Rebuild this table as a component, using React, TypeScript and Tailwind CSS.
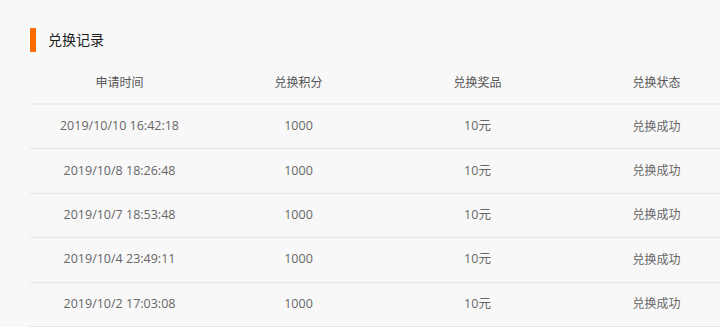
const rows = [
  { time: "2019/10/10 16:42:18", points: "1000", prize: "10元", status: "兑换成功" },
  { time: "2019/10/8 18:26:48", points: "1000", prize: "10元", status: "兑换成功" },
  { time: "2019/10/7 18:53:48", points: "1000", prize: "10元", status: "兑换成功" },
  { time: "2019/10/4 23:49:11", points: "1000", prize: "10元", status: "兑换成功" },
  { time: "2019/10/2 17:03:08", points: "1000", prize: "10元", status: "兑换成功" },
];

const headers = ["申请时间", "兑换积分", "兑换奖品", "兑换状态"];

function App() {
  return (
    <div
      className="h-[327px] w-[720px] overflow-hidden bg-[#f8f8f9]"
      style={{ fontFamily: '"Open Sans", "Noto Sans CJK SC", sans-serif' }}
    >
      <div className="pl-[30px] pt-[28px]">
        <div className="flex items-center h-[24px]">
          <span className="block h-[24px] w-[6px] rounded-[1px] bg-[#ff6a00]" />
          <h2 className="ml-[12px] -mt-[1px] text-[14px] font-normal text-[#222]">兑换记录</h2>
        </div>

        <div className="mt-[9px] w-[716px]">
          <div className="flex h-[44px] items-center pt-[2px] border-b-2 border-[#ececec]">
            {headers.map((h) => (
              <div key={h} className="flex-1 text-center text-[12px] text-[#555]">
                {h}
              </div>
            ))}
          </div>
          {rows.map((r, i) => (
            <div key={i} className="flex h-[44.4px] items-center border-b border-[#e6e6e6]">
              <div className="flex-1 text-center text-[12.5px] text-[#666]">{r.time}</div>
              <div className="flex-1 text-center text-[12.5px] text-[#666]">{r.points}</div>
              <div className="flex-1 text-center text-[12.5px] text-[#666]">{r.prize}</div>
              <div className="flex-1 text-center text-[12px] text-[#666]">{r.status}</div>
            </div>
          ))}
        </div>
      </div>
    </div>
  );
}

export default App;
